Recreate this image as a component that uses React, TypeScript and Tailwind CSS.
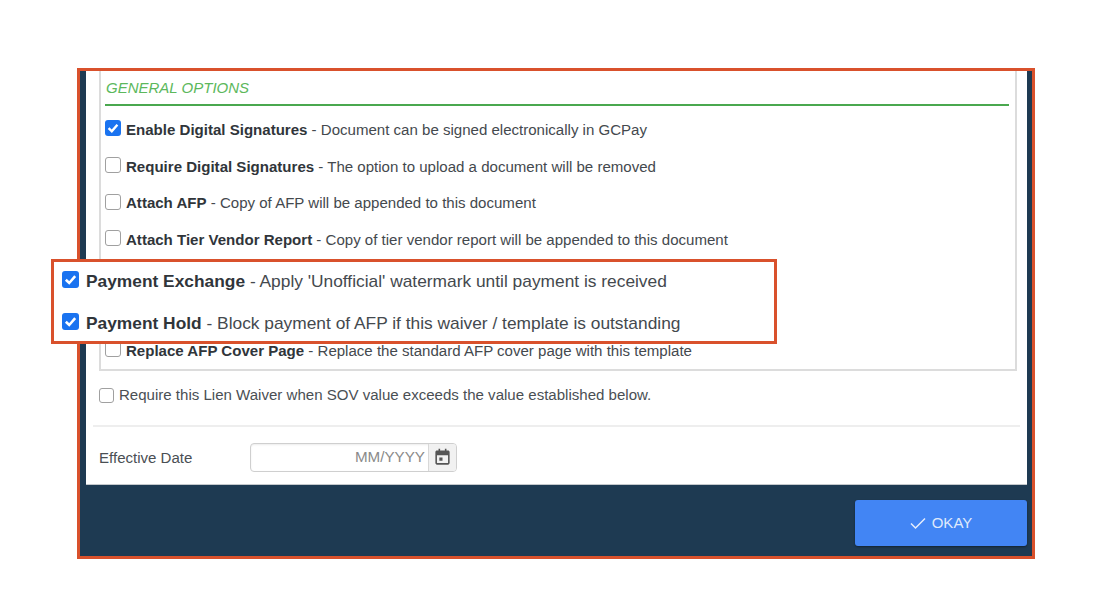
const FONT = "font-['Liberation_Sans',Arial,sans-serif]"

type Option = { title: string; text: string; checked?: boolean }

const TOP_OPTIONS: Option[] = [
  { title: 'Enable Digital Signatures', text: 'Document can be signed electronically in GCPay', checked: true },
  { title: 'Require Digital Signatures', text: 'The option to upload a document will be removed' },
  { title: 'Attach AFP', text: 'Copy of AFP will be appended to this document' },
  { title: 'Attach Tier Vendor Report', text: 'Copy of tier vendor report will be appended to this document' },
]

function Checkbox({ checked, size = 16 }: { checked?: boolean; size?: number }) {
  if (checked) {
    return (
      <span
        className="flex shrink-0 items-center justify-center rounded-[3px] bg-[#1a73f0]"
        style={{ width: size, height: size }}
      >
        <svg viewBox="0 0 16 16" className="h-full w-full" fill="none" stroke="#fff" strokeWidth="2.4">
          <path d="M3.6 8.2 6.8 11.3 12.4 4.8" />
        </svg>
      </span>
    )
  }
  return (
    <span
      className="block shrink-0 rounded-[3px] border-[1.5px] border-[#a0a0a0] bg-white"
      style={{ width: size, height: size }}
    />
  )
}

function OptionRow({ title, text, checked }: Option) {
  return (
    <div className="flex h-[36.7px] items-center gap-[5px] text-[15.05px] text-[#44494e]">
      <span className="-mt-[4px]">
        <Checkbox checked={checked} />
      </span>
      <span className="whitespace-nowrap">
        <b className="font-bold text-[#30353a]">{title}</b> - {text}
      </span>
    </div>
  )
}

function CalloutRow({ title, text }: Option) {
  return (
    <div className="flex h-[28px] items-center gap-[7px]">
      <span className="-mt-[5px]">
        <Checkbox checked size={17} />
      </span>
      <span className="whitespace-nowrap">
        <b className="font-bold text-[#30353a]">{title}</b> - {text}
      </span>
    </div>
  )
}

function CalendarIcon() {
  return (
    <svg viewBox="0 0 24 24" className="h-[19px] w-[19px]" fill="#555">
      <path d="M7 1h2v2h6V1h2v2h2c1.1 0 2 .9 2 2v14c0 1.1-.9 2-2 2H5c-1.1 0-2-.9-2-2V5c0-1.1.9-2 2-2h2V1zM5 9v10h14V9H5z" />
      <path d="M8 12h4v4H8z" />
    </svg>
  )
}

export default function App() {
  return (
    <div className={`${FONT} relative h-[603px] w-[1120px] overflow-hidden bg-white pl-[77px] pt-[68px]`}>
      <div className="flex h-[491px] w-[958px] flex-col border-[3px] border-[#d9512c] bg-[#1e3a52]">
        {/* Scrolled form body */}
        <div className="ml-[6px] mr-[5px] h-[414px] shrink-0 border-b border-[#c4c8cc] bg-white">
          <div className="ml-[13px] h-[300px] w-[918px] border-x-2 border-b-2 border-[#dcdcdc] pl-[4px] pr-[6px]">
            <div className="flex h-[35px] items-center border-b-2 border-b-[#4aa84f] pl-[1px] pt-[1px] text-[15px] italic text-[#5cb85c]">
              GENERAL OPTIONS
            </div>
            <div className="pt-[6px]">
              {TOP_OPTIONS.map((o) => (
                <OptionRow key={o.title} {...o} />
              ))}
              {/* room for the two payment rows, shown in the callout */}
              <div className="h-[74.4px]" />
              <OptionRow
                title="Replace AFP Cover Page"
                text="Replace the standard AFP cover page with this template"
              />
            </div>
          </div>

          <div className="ml-[13px] flex h-[54px] items-center gap-[5px] pb-[6px] text-[15.05px] text-[#4a4f54]">
            <Checkbox size={15} />
            <span>Require this Lien Waiver when SOV value exceeds the value established below.</span>
          </div>

          <div className="ml-[7px] mr-[7px] h-[2px] bg-[#eeeeee]" />

          <div className="ml-[13px] mt-[16px] flex items-center">
            <span className="w-[151px] pt-[1px] text-[15.05px] text-[#4a4f54]">Effective Date</span>
            <div className="flex h-[29px] w-[207px] overflow-hidden rounded-[4px] border border-[#cfcfcf] bg-white shadow-[inset_0_1px_2px_rgba(0,0,0,0.08)]">
              <span className="flex flex-1 items-center justify-end pr-[3px] text-[15.2px] text-[#8a8a8a]">MM/YYYY</span>
              <span className="flex w-[28px] items-center justify-center border-l border-[#d8d8d8] bg-[#f1f1f1]">
                <CalendarIcon />
              </span>
            </div>
          </div>
        </div>

        {/* Footer */}
        <div className="flex flex-1 justify-end pr-[5px] pt-[15px]">
          <button className="flex h-[46px] w-[172px] items-center justify-center gap-[6px] rounded-[3px] bg-[#4285f4] text-[15px] text-[#dfe9fb] shadow-[0_1px_2px_rgba(0,0,0,0.4)]">
            <svg viewBox="0 0 16 16" className="h-[16px] w-[16px]" fill="none" stroke="#e6eefc" strokeWidth="1.5">
              <path d="M1 8.5 5.5 13 15 3.5" />
            </svg>
            OKAY
          </button>
        </div>
      </div>

      {/* Highlight callout over the two payment options */}
      <div className="absolute left-[51px] top-[259px] flex h-[85px] w-[726px] flex-col justify-center gap-[14px] border-[3px] border-[#d9512c] bg-white pl-[8px] pt-[2px] text-[17.35px] text-[#44494e]">
        <CalloutRow title="Payment Exchange" text="Apply 'Unofficial' watermark until payment is received" />
        <CalloutRow title="Payment Hold" text="Block payment of AFP if this waiver / template is outstanding" />
      </div>
    </div>
  )
}
